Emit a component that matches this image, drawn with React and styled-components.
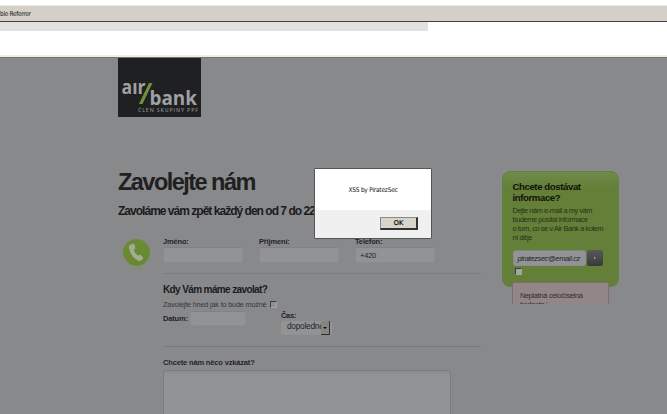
import React from "react";
import styled, { createGlobalStyle } from "styled-components";

const GlobalStyle = createGlobalStyle`
  *, *::before, *::after { box-sizing: border-box; }
  html, body { margin: 0; overflow: hidden; }
  body { font-family: "Liberation Sans", Arial, sans-serif; color: #242526; }
  h1, h2, h3, p { margin: 0; }
`;

const Screen = styled.div`
  position: relative;
  display: flex;
  flex-direction: column;
  width: 667px;
  height: 414px;
  overflow: hidden;
  background: #88898b;
`;

const BrowserChrome = styled.header`
  flex: none;
  height: 58px;
  padding-top: 5px;
  background: #fff;
  display: flex;
  flex-direction: column;
  border-bottom: 1px solid #727377;
`;

const Toolbar = styled.div`
  height: 17px;
  display: flex;
  align-items: center;
  background: #d4d0c8;
  border-top: 1px solid #ecebe4;
  border-bottom: 1px solid #414141;
  font: 6.5px/14px "DejaVu Sans Condensed", "DejaVu Sans", sans-serif;
  letter-spacing: -0.31px;
  color: #111;
  white-space: nowrap;
`;

const AddressStrip = styled.div`
  width: 428px;
  height: 9px;
  background: #e0e1e0;
`;

const ChromeEdge = styled.div`
  height: 2px;
  margin-top: auto;
  background: #eeefdf;
`;

const Page = styled.main`
  flex: 1;
  min-height: 0;
  padding-left: 118px;
  display: flex;
  flex-direction: column;
`;

const Logo = styled.svg`
  flex: none;
  display: block;
  width: 83px;
  height: 59px;
`;

const Columns = styled.div`
  display: flex;
  align-items: flex-start;
  padding-top: 50px;
`;

const MainColumn = styled.section`
  flex: none;
  width: 384px;
`;

const Title = styled.h1`
  font-size: 23.5px;
  line-height: 30px;
  letter-spacing: -1.53px;
  white-space: nowrap;
  color: #1f2021;
`;

const Subtitle = styled.h2`
  margin-top: 6px;
  font-size: 12px;
  line-height: 16px;
  letter-spacing: -0.98px;
  white-space: nowrap;
  color: #1a1b1c;
`;

const FormRow = styled.div`
  display: flex;
  margin-top: 17px;
`;

const PhoneIcon = styled.svg`
  flex: none;
  width: 45px;
  height: 46px;
  display: block;
`;

const Form = styled.form`
  width: 318px;
`;

const Fields = styled.div`
  display: flex;
  gap: 16px;
  height: 38px;
  border-bottom: 1px solid #7c7d80;
`;

const Field = styled.label`
  display: flex;
  flex-direction: column;
  width: 80px;
  padding-top: 1px;
`;

const Label = styled.span`
  font-size: 7.5px;
  font-weight: bold;
  line-height: 10px;
  letter-spacing: ${(p) => p.$track || "-0.16px"};
  white-space: nowrap;
`;

const TextBox = styled.span`
  flex: none;
  display: flex;
  align-items: center;
  width: ${(p) => p.$width || "80px"};
  height: ${(p) => p.$height || "16px"};
  padding-left: ${(p) => p.$inset || "5px"};
  border-radius: 3px;
  border: 1px solid #8c8d90;
  border-top-color: #808184;
  background: #929395;
  font-size: 7.5px;
  font-style: ${(p) => (p.$italic ? "italic" : "normal")};
  white-space: nowrap;
  letter-spacing: ${(p) => p.$track || "-0.2px"};
`;

const WhenSection = styled.section`
  height: 73px;
  padding-top: 9px;
  border-bottom: 1px solid #77787b;
`;

const SectionTitle = styled.h3`
  font-size: 10px;
  line-height: 14px;
  letter-spacing: -0.62px;
  white-space: nowrap;
  color: #1a1b1c;
`;

const NowOption = styled.label`
  display: flex;
  align-items: center;
  gap: 4px;
  height: 14px;
  font-size: 7.3px;
  letter-spacing: -0.19px;
  color: #37383a;
  white-space: nowrap;
`;

const Checkbox = styled.span`
  width: 7px;
  height: 7px;
  border: 1px solid #a5a6a8;
  border-top-color: #3a3b3d;
  border-left-color: #3a3b3d;
  background: ${(p) => (p.$light ? "#a2a3a5" : "#8f9093")};
`;

const DateTime = styled.div`
  display: flex;
  align-items: flex-start;
`;

const DateField = styled.label`
  display: flex;
  align-items: center;
  gap: 2px;
  width: 118px;
  height: 15px;
`;

const TimeField = styled.label`
  display: flex;
  flex-direction: column;
`;

const Select = styled.span`
  display: flex;
  justify-content: space-between;
  width: 51px;
  height: 14px;
  padding-left: 6px;
  border-radius: 3px;
  background: #929395;
`;

const SelectValue = styled.span`
  width: 34px;
  overflow: hidden;
  font-size: 8.3px;
  line-height: 10px;
  letter-spacing: -0.25px;
  white-space: nowrap;
`;

const SelectArrow = styled.span`
  display: flex;
  align-items: center;
  justify-content: center;
  width: 9px;
  height: 14px;
  margin-right: 2px;
  background: #85857f;
  border-right: 1px solid #303132;
  border-bottom: 1px solid #303132;

  &::after {
    content: "";
    border: 2px solid transparent;
    border-top: 2px solid #111;
    border-bottom: 0;
  }
`;

const Message = styled.label`
  display: flex;
  flex-direction: column;
  padding-top: 11px;
`;

const MessageBox = styled.span`
  width: 288px;
  height: 60px;
  margin-top: 2px;
  border-radius: 3px;
  border: 1px solid #7b7c7f;
  background: linear-gradient(#8c8d8f, #929395 6px);
`;

const Sidebar = styled.aside`
  width: 117px;
  height: 133px;
  margin-top: 4px;
  overflow: hidden;
`;

const Newsletter = styled.section`
  height: 116px;
  padding: 9px 10px 0 9.5px;
  border-radius: 8px;
  border: 1px solid #64803a;
  background: linear-gradient(#708a4b, #647f38 16px);
`;

const NewsTitle = styled.h3`
  font-size: 9.6px;
  line-height: 11px;
  color: #101309;
  letter-spacing: -0.4px;
  white-space: nowrap;
`;

const NewsText = styled.p`
  margin-top: 3px;
  font-size: 7.3px;
  line-height: 9px;
  letter-spacing: -0.37px;
  color: #26301a;
  white-space: nowrap;
`;

const EmailRow = styled.div`
  display: flex;
  gap: 1px;
  margin: 8px 0 2px;
`;

const Submit = styled.button`
  display: flex;
  align-items: center;
  justify-content: center;
  width: 16px;
  height: 16px;
  padding: 0;
  border: 0;
  border-radius: 2px;
  background: linear-gradient(#58595b, #38393b);

  &::after {
    content: "";
    border: 1.5px solid transparent;
    border-left: 2px solid #b5b6b8;
    border-right: 0;
  }
`;

const ConsentRow = styled.div`
  padding-left: 2px;
`;

const ErrorNote = styled.p`
  width: 97px;
  height: 30px;
  margin: -5px 0 0 10px;
  padding: 8px 0 0 7px;
  border: 1px solid #7f6c6c;
  border-radius: 2px;
  background: #938687;
  position: relative;
  font-size: 7.3px;
  line-height: 9px;
  letter-spacing: -0.26px;
  color: #37282a;
  white-space: nowrap;
`;

const Dialog = styled.div`
  position: absolute;
  left: 314px;
  top: 168px;
  width: 118px;
  height: 71px;
  display: flex;
  flex-direction: column;
  border: 1px solid #535456;
  border-radius: 1px;
  background: #fff;
  font-family: "DejaVu Sans Condensed", "DejaVu Sans", sans-serif;
  color: #111;
`;

const DialogText = styled.p`
  height: 41px;
  font-size: 6.5px;
  line-height: 42px;
  letter-spacing: -0.22px;
  text-align: center;
`;

const DialogFooter = styled.div`
  flex: 1;
  display: flex;
  justify-content: flex-end;
  padding: 7px 13px 0 0;
  background: #f0f0f0;
`;

const OkButton = styled.button`
  width: 38px;
  height: 13px;
  padding: 0;
  border: 1px solid #8b8984;
  border-right: 2px solid #333;
  border-bottom: 2px solid #333;
  background: #d8d4cc;
  font: 6.5px/9px "DejaVu Sans", sans-serif;
  -webkit-text-stroke: 0.2px #000;
  color: #000;
`;

function AirBankLogo() {
  return (
    <Logo viewBox="0 0 83 59">
      <rect width="83" height="59" fill="#1f2021" />
      <g fill="#a0a1a3" fontFamily="Open Sans, sans-serif" fontWeight="700">
        <text x="3.5" y="36" fontSize="20" textLength="24" lengthAdjust="spacingAndGlyphs">aır</text>
        <text x="31.5" y="46.5" fontSize="19.5" textLength="47.5" lengthAdjust="spacingAndGlyphs">bank</text>
      </g>
      <path d="M31 25H34.5L24.5 46H21Z" fill="#709137" />
      <text x="20" y="54.3" fontSize="5.2" fontFamily="Open Sans, sans-serif" fontWeight="600" fill="#898a8c" textLength="60">
        ČLEN SKUPINY PPF
      </text>
    </Logo>
  );
}

function PhoneBadge() {
  return (
    <PhoneIcon viewBox="0 0 45 46">
      <defs>
        <linearGradient id="badge" x1="0" y1="0" x2="0" y2="1">
          <stop offset="0" stopColor="#6c8b37" />
          <stop offset="1" stopColor="#66882d" />
        </linearGradient>
        <linearGradient id="reflection" x1="0" y1="0" x2="0" y2="1">
          <stop offset="0" stopColor="#7f925c" stopOpacity="0.7" />
          <stop offset="1" stopColor="#88898b" stopOpacity="0" />
        </linearGradient>
      </defs>
      <path d="M9 33Q18 27 28 33L26 38H11Z" fill="url(#reflection)" />
      <circle cx="18.5" cy="16.3" r="13.4" fill="url(#badge)" />
      <path
        d="M12.2 8.8L15 7.9Q16 7.7 16.3 8.5L17.4 11.8Q17.5 12.5 16.8 12.9L15.5 13.7Q16.8 17.5 20 19.8L21.3 19Q22 18.5 22.6 19L25 21.5Q25.5 22.3 24.8 22.9L22.5 24.8Q20.5 25.5 17.5 23Q12 18.5 11 12Q10.8 9.5 12.2 8.8Z"
        fill="#a4ab98"
      />
    </PhoneIcon>
  );
}

export default function App() {
  return (
    <Screen>
      <GlobalStyle />
      <BrowserChrome>
        <Toolbar>ble Referrer</Toolbar>
        <AddressStrip />
        <ChromeEdge />
      </BrowserChrome>
      <Page>
        <AirBankLogo />
        <Columns>
          <MainColumn>
            <Title>Zavolejte nám</Title>
            <Subtitle>Zavoláme vám zpět každý den od 7 do 22</Subtitle>
            <FormRow>
              <PhoneBadge />
              <Form>
                <Fields>
                  <Field>
                    <Label>Jméno:</Label>
                    <TextBox />
                  </Field>
                  <Field>
                    <Label>Příjmení:</Label>
                    <TextBox />
                  </Field>
                  <Field>
                    <Label>Telefon:</Label>
                    <TextBox $inset="4px">+420</TextBox>
                  </Field>
                </Fields>
                <WhenSection>
                  <SectionTitle>Kdy Vám máme zavolat?</SectionTitle>
                  <NowOption>
                    Zavolejte hned jak to bude možné
                    <Checkbox />
                  </NowOption>
                  <DateTime>
                    <DateField>
                      <Label>Datum:</Label>
                      <TextBox $width="56px" $height="15px" />
                    </DateField>
                    <TimeField>
                      <Label $track="-0.3px">Čas:</Label>
                      <Select>
                        <SelectValue>dopoledne</SelectValue>
                        <SelectArrow />
                      </Select>
                    </TimeField>
                  </DateTime>
                </WhenSection>
                <Message>
                  <Label>Chcete nám něco vzkázat?</Label>
                  <MessageBox />
                </Message>
              </Form>
            </FormRow>
          </MainColumn>
          <Sidebar>
            <Newsletter>
              <NewsTitle>
                Chcete dostávat
                <br />
                informace?
              </NewsTitle>
              <NewsText>
                Dejte nám e-mail a my vám
                <br />
                budeme posílat informace
                <br />
                o tom, co se v Air Bank a kolem
                <br />
                ní děje
              </NewsText>
              <EmailRow>
                <TextBox $width="73px" $inset="4px" $italic $track="-0.36px">piratezsec@email.cz</TextBox>
                <Submit aria-label="Odeslat" />
              </EmailRow>
              <ConsentRow>
                <Checkbox as="div" $light />
              </ConsentRow>
            </Newsletter>
            <ErrorNote>
              Neplatná celočíselná
              <br />
              hodnota '
            </ErrorNote>
          </Sidebar>
        </Columns>
      </Page>
      <Dialog role="alertdialog">
        <DialogText>XSS by PiratezSec</DialogText>
        <DialogFooter>
          <OkButton>OK</OkButton>
        </DialogFooter>
      </Dialog>
    </Screen>
  );
}
